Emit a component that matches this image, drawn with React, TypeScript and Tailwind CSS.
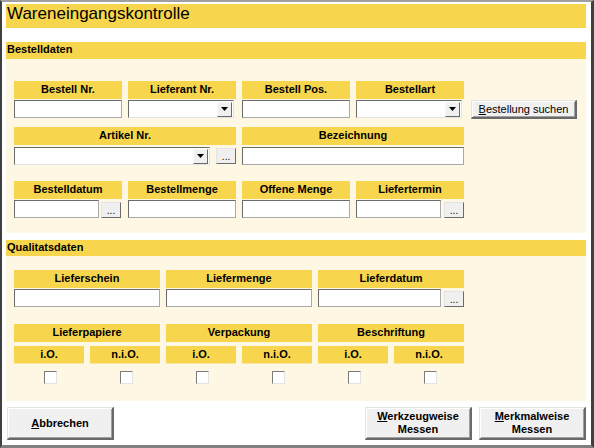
import type { ReactNode } from 'react'

const font = "font-['Liberation_Sans',Arial,sans-serif]"

function Label({ children, className = '' }: { children: ReactNode; className?: string }) {
  return (
    <div className={`h-[18px] bg-[#f7d64e] text-center text-[11px] font-bold leading-[16px] ${className}`}>
      {children}
    </div>
  )
}

function TextBox({ className = '' }: { className?: string }) {
  return (
    <div
      className={`h-[18px] bg-white border border-t-[#6b6b6b] border-l-[#6b6b6b] border-b-[#a9a9a9] border-r-[#a9a9a9] ${className}`}
    />
  )
}

function Combo({ className = '' }: { className?: string }) {
  return (
    <div
      className={`h-[18px] bg-white border border-t-[#6b6b6b] border-l-[#6b6b6b] border-b-[#e3e3e3] border-r-[#e3e3e3] flex items-center justify-end pr-[1px] ${className}`}
    >
      <div className="w-[15px] h-[15px] bg-[#f0f0f0] border border-t-[#f8f8f8] border-l-[#f8f8f8] border-b-[#6b6b6b] border-r-[#6b6b6b] flex items-center justify-center">
        <svg width="7" height="4" viewBox="0 0 7 4">
          <path d="M0 0h7L3.5 4z" fill="#000" />
        </svg>
      </div>
    </div>
  )
}

function Dots({ className = '' }: { className?: string }) {
  return (
    <div
      className={`w-[20px] h-[16px] bg-[#f0f0f0] border border-t-[#e3e3e3] border-l-[#e3e3e3] border-b-[#6b6b6b] border-r-[#6b6b6b] flex items-end justify-center text-[10px] leading-[12px] ${className}`}
    >
      ...
    </div>
  )
}

function Check() {
  return (
    <div className="w-[70px] flex justify-center pl-[2px]">
      <div className="w-[13px] h-[13px] bg-white border border-t-[#7a7a7a] border-l-[#7a7a7a] border-b-[#e3e3e3] border-r-[#e3e3e3]" />
    </div>
  )
}

function WinButton({ children, className = '' }: { children: ReactNode; className?: string }) {
  return (
    <button
      className={`bg-[#f0f0f0] border-t border-l border-t-[#e3e3e3] border-l-[#e3e3e3] border-b-2 border-r-2 border-b-[#696969] border-r-[#696969] shadow-[inset_1px_1px_0_#fff,inset_-1px_-1px_0_#a0a0a0] text-[11px] text-black ${className}`}
    >
      {children}
    </button>
  )
}

const quality = ['Lieferpapiere', 'Verpackung', 'Beschriftung']

export default function App() {
  return (
    <div
      className={`w-[594px] h-[448px] overflow-hidden bg-white border-t-2 border-t-[#a0a0a0] border-l-2 border-l-[#404040] border-r-[3px] border-r-[#404040] border-b-[3px] border-b-[#808080] pl-[4px] pt-[2px] text-black ${font}`}
    >
      <div className="w-[580px]">
        {/* Title */}
        <div className="h-[24px] bg-[#f7d64e] pl-[1px] text-[17px] leading-[19px]">Wareneingangskontrolle</div>

        {/* Bestelldaten */}
        <div className="mt-[14px] h-[17px] bg-[#f7d64e] pl-[1px] text-[11px] font-bold leading-[15px]">Bestelldaten</div>
        <div className="h-[174px] bg-[#fdf7e4] pl-[8px] pt-[22px]">
          <div className="flex items-start gap-[6px]">
            <div className="w-[108px] flex flex-col gap-[1px]">
              <Label>Bestell Nr.</Label>
              <TextBox />
            </div>
            <div className="w-[108px] flex flex-col gap-[1px]">
              <Label>Lieferant Nr.</Label>
              <Combo className="w-[106px]" />
            </div>
            <div className="w-[108px] flex flex-col gap-[1px]">
              <Label>Bestell Pos.</Label>
              <TextBox />
            </div>
            <div className="w-[108px] flex flex-col gap-[1px]">
              <Label>Bestellart</Label>
              <Combo className="w-[106px]" />
            </div>
            <WinButton className="ml-[1px] mt-[19px] w-[106px] h-[19px] leading-[14px]">
              <span className="underline">B</span>estellung suchen
            </WinButton>
          </div>

          <div className="mt-[8px] flex gap-[6px]">
            <div className="w-[222px]">
              <Label>Artikel Nr.</Label>
              <div className="mt-[2px] flex items-end">
                <Combo className="w-[197px]" />
                <Dots className="ml-[6px] w-[18px] h-[15px] mb-[1px]" />
              </div>
            </div>
            <div className="w-[222px]">
              <Label>Bezeichnung</Label>
              <TextBox className="mt-[2px]" />
            </div>
          </div>

          <div className="mt-[16px] flex gap-[6px]">
            <div className="w-[108px]">
              <Label>Bestelldatum</Label>
              <div className="mt-[1px] flex items-end">
                <TextBox className="w-[85px]" />
                <Dots className="ml-[2px]" />
              </div>
            </div>
            <div className="w-[108px]">
              <Label>Bestellmenge</Label>
              <TextBox className="mt-[1px]" />
            </div>
            <div className="w-[108px]">
              <Label>Offene Menge</Label>
              <TextBox className="mt-[1px]" />
            </div>
            <div className="w-[108px]">
              <Label>Liefertermin</Label>
              <div className="mt-[1px] flex items-end">
                <TextBox className="w-[85px]" />
                <Dots className="ml-[3px]" />
              </div>
            </div>
          </div>
        </div>

        {/* Qualitatsdaten */}
        <div className="mt-[7px] h-[16px] bg-[#f7d64e] pl-[1px] text-[11px] font-bold leading-[15px]">Qualitatsdaten</div>
        <div className="h-[145px] bg-[#fdf7e4] pl-[8px] pt-[14px]">
          <div className="flex gap-[6px]">
            <div className="w-[146px]">
              <Label>Lieferschein</Label>
              <TextBox className="mt-[1px]" />
            </div>
            <div className="w-[146px]">
              <Label>Liefermenge</Label>
              <TextBox className="mt-[1px]" />
            </div>
            <div className="w-[146px]">
              <Label>Lieferdatum</Label>
              <div className="mt-[1px] flex items-end">
                <TextBox className="w-[123px]" />
                <Dots className="ml-[3px]" />
              </div>
            </div>
          </div>

          <div className="mt-[17px] flex gap-[6px]">
            {quality.map((q) => (
              <div key={q} className="w-[146px]">
                <Label>{q}</Label>
                <div className="mt-[4px] flex gap-[6px]">
                  <Label className="w-[70px] border-b border-b-[#fbe7a0] leading-[15px]">i.O.</Label>
                  <Label className="w-[70px] border-b border-b-[#fbe7a0] leading-[15px]">n.i.O.</Label>
                </div>
                <div className="mt-[7px] flex gap-[6px]">
                  <Check />
                  <Check />
                </div>
              </div>
            ))}
          </div>
        </div>

        {/* Buttons */}
        <div className="mt-[6px] flex h-[33px] gap-[7px]">
          <WinButton className="ml-[1px] w-[107px] h-[33px] font-bold">
            <span className="underline">A</span>bbrechen
          </WinButton>
          <WinButton className="ml-auto w-[107px] h-[33px] font-bold leading-[13px]">
            <span className="underline">W</span>erkzeugweise
            <br />
            Messen
          </WinButton>
          <WinButton className="w-[107px] h-[33px] font-bold leading-[13px]">
            <span className="underline">M</span>erkmalweise
            <br />
            Messen
          </WinButton>
        </div>
      </div>
    </div>
  )
}
